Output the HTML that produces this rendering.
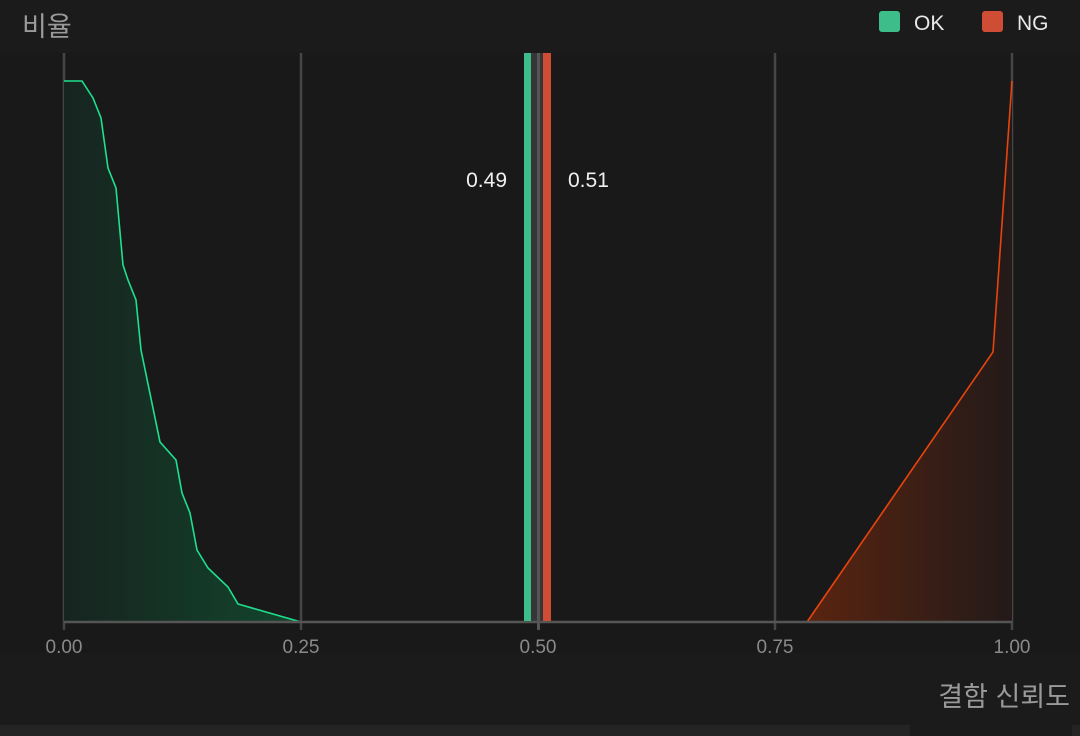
<!DOCTYPE html>
<html><head><meta charset="utf-8">
<style>
html,body{margin:0;padding:0;background:#1b1b1b;width:1080px;height:736px;overflow:hidden}
svg{display:block}
text{font-family:"Liberation Sans","Noto Sans CJK KR",sans-serif}
</style></head><body>
<svg width="1080" height="736" viewBox="0 0 1080 736" xmlns="http://www.w3.org/2000/svg">
<defs>
<linearGradient id="gg" x1="64" y1="0" x2="301" y2="0" gradientUnits="userSpaceOnUse">
<stop offset="0" stop-color="#172420"/><stop offset="1" stop-color="#12462c"/>
</linearGradient>
<linearGradient id="rg" x1="807" y1="0" x2="1012" y2="0" gradientUnits="userSpaceOnUse">
<stop offset="0" stop-color="#5a2410"/><stop offset="1" stop-color="#231a19"/>
</linearGradient>
</defs>
<rect x="0" y="0" width="1080" height="736" fill="#1b1b1b"/>
<rect x="0" y="53" width="1080" height="600" fill="#191919"/>
<rect x="0" y="725" width="910" height="11" fill="#242424"/>
<rect x="1072" y="725" width="8" height="11" fill="#242424"/>
<text x="22" y="36" font-size="27" fill="#9a9a9a">비율</text>
<rect x="879" y="11" width="21" height="21" rx="3" fill="#3dbd89"/>
<text x="914" y="30" font-size="21" fill="#e8e8e8">OK</text>
<rect x="982" y="11" width="21" height="21" rx="3" fill="#cf4c35"/>
<text x="1017" y="30" font-size="21" fill="#e8e8e8">NG</text>
<g stroke="#464646" stroke-width="2.5">
<line x1="64" y1="53" x2="64" y2="630"/>
<line x1="301" y1="53" x2="301" y2="630"/>
<line x1="775" y1="53" x2="775" y2="630"/>
<line x1="1012" y1="53" x2="1012" y2="630"/>
</g>
<rect x="531" y="53" width="12" height="569" fill="#363636"/>
<line x1="538.5" y1="53" x2="538.5" y2="630" stroke="#555" stroke-width="3"/>
<polygon fill="url(#gg)" points="64,81 82,81 93,98 101,118 108,168 116,188 123,265 128,280 136,300 141,350 160,442 176,460 182,493 190,513 197,550 208,568 228,587 238,604 301,622 64,622"/>
<polyline fill="none" stroke="#1fe08e" stroke-width="1.6" points="64,81 82,81 93,98 101,118 108,168 116,188 123,265 128,280 136,300 141,350 160,442 176,460 182,493 190,513 197,550 208,568 228,587 238,604 301,622"/>
<polygon fill="url(#rg)" points="807,622 993,352 1012,81 1012,622"/>
<polyline fill="none" stroke="#e8440e" stroke-width="1.6" points="807,622 993,352 1012,81"/>
<line x1="64" y1="622" x2="1012" y2="622" stroke="#555" stroke-width="2.5"/>
<rect x="524" y="53" width="7" height="568" fill="#3dbd89"/>
<rect x="543" y="53" width="8" height="568" fill="#cf4c35"/>
<text x="507" y="187" font-size="21" fill="#f0f0f0" text-anchor="end">0.49</text>
<text x="568" y="187" font-size="21" fill="#f0f0f0">0.51</text>
<g font-size="19" fill="#8a8a8a" text-anchor="middle">
<text x="64" y="653">0.00</text>
<text x="301" y="653">0.25</text>
<text x="538" y="653">0.50</text>
<text x="775" y="653">0.75</text>
<text x="1012" y="653">1.00</text>
</g>
<text x="1070" y="706" font-size="27" fill="#9a9a9a" text-anchor="end">결함 신뢰도</text>
</svg>
</body></html>
